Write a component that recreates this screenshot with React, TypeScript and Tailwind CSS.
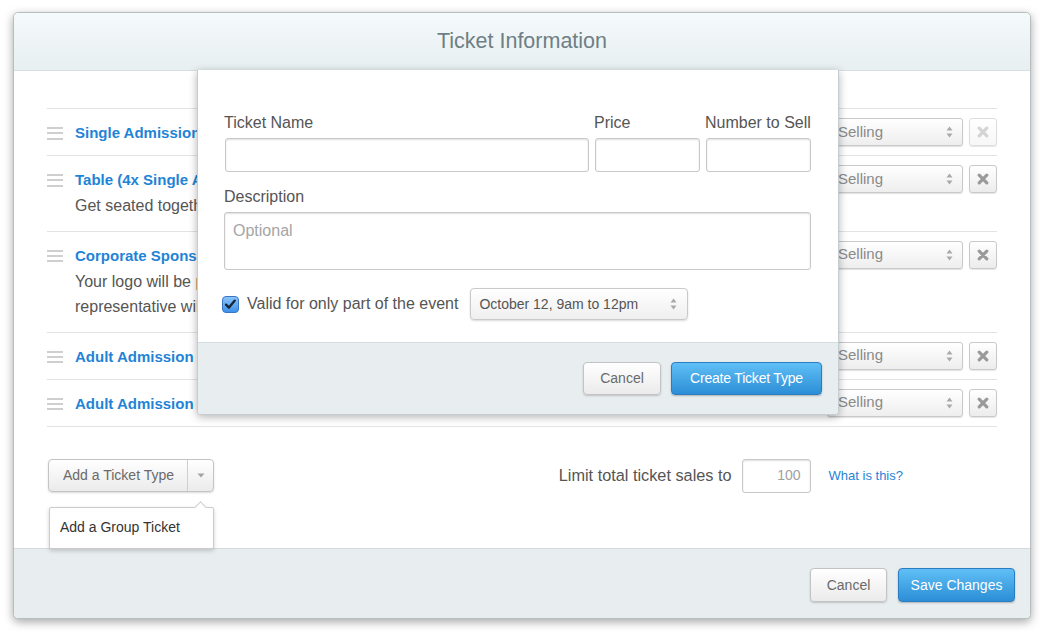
import React from "react";

const Handle = () => (
  <div className="w-[16px] shrink-0 pt-[8px] flex flex-col gap-[3.3px]">
    <div className="h-[2px] bg-[#cfcfcf]" />
    <div className="h-[2px] bg-[#cfcfcf]" />
    <div className="h-[2px] bg-[#cfcfcf]" />
  </div>
);

const Arrows = () => (
  <svg width="7" height="12" viewBox="0 0 7 12">
    <path d="M3.5 0.5 L6.5 4.5 H0.5Z M3.5 11.5 L6.5 7.5 H0.5Z" fill="#a9a9a9" />
  </svg>
);

const XIcon = ({ light }: { light?: boolean }) => (
  <svg width="12" height="12" viewBox="0 0 12 12">
    <path
      d="M2.2 2.2 L9.8 9.8 M9.8 2.2 L2.2 9.8"
      stroke={light ? "#d4d4d4" : "#9a9a9a"}
      strokeWidth="3.2"
      strokeLinecap="round"
    />
  </svg>
);

type Row = { title: string; desc?: React.ReactNode; disabled?: boolean };

const rows: Row[] = [
  { title: "Single Admission", disabled: true },
  { title: "Table (4x Single Admission)", desc: "Get seated together at one table with your friends." },
  {
    title: "Corporate Sponsorship",
    desc: (
      <>
        Your logo will be printed on the event program and a
        <br />
        representative will be invited to speak at the event.
      </>
    ),
  },
  { title: "Adult Admission" },
  { title: "Adult Admission" },
];

const grayBtn =
  "rounded-[4px] border border-[#c3c3c3] bg-gradient-to-b from-[#ffffff] to-[#ebebeb] shadow-[0_1px_2px_rgba(0,0,0,0.18)] text-[#6a6a6a] text-[14px] flex items-center justify-center";
const blueBtn =
  "rounded-[4px] border border-[#2a7dc0] bg-gradient-to-b from-[#5fbff5] to-[#2b8ed6] shadow-[0_1px_2px_rgba(0,0,0,0.25)] text-white text-[14px] flex items-center justify-center";
const inputCls =
  "rounded-[3px] border border-[#c8c8c8] bg-white shadow-[inset_0_1px_2px_rgba(0,0,0,0.13)]";

export default function App() {
  return (
    <div className="w-[1051px] h-[641px] bg-white pt-[12px] pl-[13px] font-['Liberation_Sans',Arial,Helvetica,sans-serif]">
      <div className="relative w-[1018px] h-[607px] rounded-[5px] border border-[#b7bec1] bg-white shadow-[0_3px_10px_rgba(0,0,0,0.35)] flex flex-col">
        {/* Header */}
        <div className="h-[58px] shrink-0 rounded-t-[5px] border-b border-[#d6dfe2] bg-gradient-to-b from-[#f5fafb] to-[#e8eff1] flex items-center justify-center">
          <span className="text-[21.5px] text-[#6e7f85]">Ticket Information</span>
        </div>

        {/* Body */}
        <div className="flex-1 px-[33px] pt-[37px] flex flex-col">
          <div className="border-b border-[#e3e3e3]">
            {rows.map((r, i) => (
              <div key={i} className="border-t border-[#e3e3e3] pt-[10px] pb-[8px] flex">
                <Handle />
                <div className="ml-[12px] flex-1">
                  <div className="text-[15px] font-bold leading-[28px] text-[#1f84d6]">{r.title}</div>
                  {r.desc && (
                    <div className="text-[16px] leading-[25.5px] text-[#555] -mt-[1px] pb-[4px]">{r.desc}</div>
                  )}
                </div>
                <div className="flex items-start gap-[6px] -mt-[1px]">
                  <div className="w-[136px] h-[28px] rounded-[3px] border border-[#c9c9c9] bg-gradient-to-b from-[#ffffff] to-[#eeeeee] shadow-[0_1px_1px_rgba(0,0,0,0.12)] flex items-center justify-between pl-[10px] pr-[9px] text-[15px] text-[#8a8a8a]">
                    <span>Selling</span>
                    <Arrows />
                  </div>
                  <div
                    className={`w-[28px] h-[28px] rounded-[3px] border ${
                      r.disabled ? "border-[#dedede] from-[#ffffff] to-[#f7f7f7]" : "border-[#c9c9c9] from-[#ffffff] to-[#ececec]"
                    } bg-gradient-to-b shadow-[0_1px_1px_rgba(0,0,0,0.1)] flex items-center justify-center`}
                  >
                    <XIcon light={r.disabled} />
                  </div>
                </div>
              </div>
            ))}
          </div>

          {/* Controls */}
          <div className="mt-[32px] flex items-start">
            <div className="relative ml-[1px]">
              <div className="flex h-[33px] rounded-[4px] border border-[#c4c4c4] bg-gradient-to-b from-[#ffffff] to-[#ebebeb] shadow-[0_1px_2px_rgba(0,0,0,0.15)]">
                <div className="w-[138px] flex items-center pl-[14px] text-[14px] text-[#6a6a6a]">
                  Add a Ticket Type
                </div>
                <div className="w-[26px] border-l border-[#cfcfcf] flex items-center justify-center">
                  <svg width="8" height="5" viewBox="0 0 8 5">
                    <path d="M0.5 0.5 H7.5 L4 4.5Z" fill="#a3a3a3" />
                  </svg>
                </div>
              </div>
              <div className="absolute left-[1px] top-[48px] w-[165px] h-[42px] bg-white border border-[#cbcbcb] rounded-[2px] shadow-[0_2px_4px_rgba(0,0,0,0.18)] flex items-center pl-[10px] text-[14px] text-[#333]">
                <div className="absolute -top-[5px] right-[8px] w-[9px] h-[9px] rotate-45 bg-white border-l border-t border-[#cbcbcb]" />
                <span className="relative">Add a Group Ticket</span>
              </div>
            </div>

            <div className="ml-auto mr-[94px] flex items-center h-[34px]">
              <span className="text-[16.3px] text-[#555]">Limit total ticket sales to</span>
              <div className={`${inputCls} ml-[10px] w-[69px] h-[34px] flex items-center justify-end pr-[9px] text-[14px] text-[#a0a0a0]`}>
                100
              </div>
              <span className="ml-[18px] text-[13px] text-[#1f84d6]">What is this?</span>
            </div>
          </div>
        </div>

        {/* Footer */}
        <div className="h-[70px] shrink-0 rounded-b-[5px] border-t border-[#d3dadd] bg-[#e8edef] flex items-center justify-end gap-[11px] pr-[15px] pt-[3px]">
          <div className={`${grayBtn} w-[77px] h-[34px]`}>Cancel</div>
          <div className={`${blueBtn} w-[117px] h-[34px]`}>Save Changes</div>
        </div>

        {/* Modal */}
        <div className="absolute left-[183px] top-[57px] w-[642px] bg-white border border-[#c6cdd0] border-t-0 rounded-b-[4px] shadow-[0_2px_8px_rgba(0,0,0,0.3)]">
          <div className="pt-[43px] pl-[26px] pr-[27px] pb-[22px]">
            <div className="grid grid-cols-[1fr_105px_105px] gap-x-[6px]">
              <div className="text-[16px] leading-[20px] text-[#555]">Ticket Name</div>
              <div className="text-[16px] leading-[20px] text-[#555] -ml-[1px]">Price</div>
              <div className="text-[16px] leading-[20px] text-[#555] -ml-[1px]">Number to Sell</div>
              <div className={`${inputCls} h-[34px] mt-[5px] ml-[1px]`} />
              <div className={`${inputCls} h-[34px] mt-[5px]`} />
              <div className={`${inputCls} h-[34px] mt-[5px]`} />
            </div>
            <div className="mt-[15px] text-[16px] leading-[20px] text-[#555]">Description</div>
            <div className={`${inputCls} mt-[5px] h-[58px] pl-[8px] pt-[6px] text-[16px] text-[#a5a5a5]`}>Optional</div>
            <div className="mt-[18px] h-[32px] flex items-center">
              <svg width="17" height="17" viewBox="0 0 17 17" className="-ml-[2px]">
                <defs>
                  <linearGradient id="cb" x1="0" y1="0" x2="0" y2="1">
                    <stop offset="0" stopColor="#8cc6fb" />
                    <stop offset="1" stopColor="#3b8fea" />
                  </linearGradient>
                </defs>
                <rect x="0.5" y="0.5" width="16" height="16" rx="3.5" fill="url(#cb)" stroke="#3a75c2" />
                <path d="M4 8.6 L7 11.6 L12.8 4.6" fill="none" stroke="#1a2433" strokeWidth="2.3" strokeLinecap="round" strokeLinejoin="round" />
              </svg>
              <span className="ml-[8px] text-[16px] text-[#555]">Valid for only part of the event</span>
              <div className="ml-[12px] w-[218px] h-[32px] rounded-[4px] border border-[#c9c9c9] bg-gradient-to-b from-[#ffffff] to-[#efefef] shadow-[0_1px_2px_rgba(0,0,0,0.15)] flex items-center justify-between pl-[8px] pr-[10px] text-[14px] text-[#555]">
                <span>October 12, 9am to 12pm</span>
                <Arrows />
              </div>
            </div>
          </div>
          <div className="h-[72px] rounded-b-[4px] border-t border-[#d5dcdf] bg-[#e8edf0] flex items-center justify-end gap-[10px] pr-[16px]">
            <div className={`${grayBtn} w-[78px] h-[33px]`}>Cancel</div>
            <div className={`${blueBtn} w-[151px] h-[33px] tracking-[-0.2px]`}>Create Ticket Type</div>
          </div>
        </div>
      </div>
    </div>
  );
}
